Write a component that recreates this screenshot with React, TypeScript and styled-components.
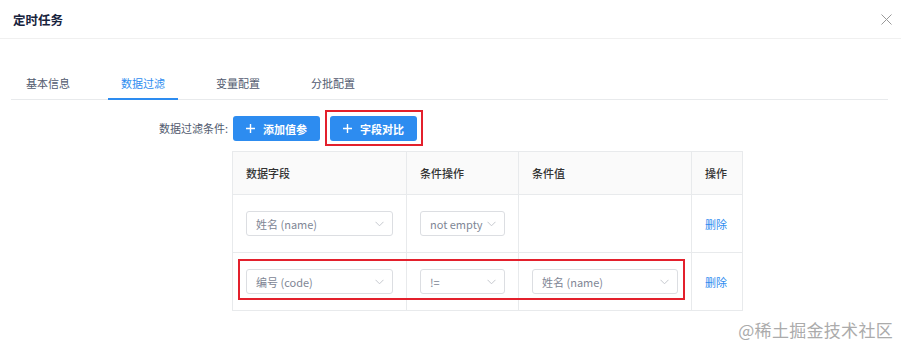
import React from "react";
import styled, { createGlobalStyle } from "styled-components";

const GlobalStyle = createGlobalStyle`
  html, body {
    margin: 0;
    padding: 0;
    background: #fff;
  }
  body {
    font-family: "Noto Sans CJK SC", "Noto Sans", sans-serif;
    font-size: 11px;
    color: #515a6e;
  }
`;

const Modal = styled.div`
  position: relative;
  width: 901px;
  height: 348px;
  background: #fff;
  overflow: hidden;
`;

const Header = styled.div`
  height: 38px;
  border-bottom: 1px solid #f0f0f0;
  display: flex;
  align-items: center;
  justify-content: space-between;
  padding: 0 9px 0 13px;
`;

const Title = styled.div`
  font-size: 12.5px;
  font-weight: 600;
  color: #17233d;
`;

const Close = styled.div`
  width: 11px;
  height: 11px;
  display: flex;
  align-items: center;
  justify-content: center;
`;

const Body = styled.div`
  padding: 27px 13px 0 11px;
`;

const Tabs = styled.div`
  display: flex;
  gap: 25px;
  padding-left: 2px;
  border-bottom: 1px solid #e8eaec;
`;

const Tab = styled.div<{ active?: boolean }>`
  position: relative;
  height: 33px;
  padding: 0 13px;
  display: flex;
  align-items: center;
  color: ${(p) => (p.active ? "#2d8cf0" : "#515a6e")};
  &::after {
    content: "";
    display: ${(p) => (p.active ? "block" : "none")};
    position: absolute;
    left: 0;
    right: 0;
    bottom: -1px;
    height: 2px;
    background: #2d8cf0;
  }
`;

const FormItem = styled.div`
  display: flex;
  margin-top: 16px;
`;

const Label = styled.div`
  width: 221px;
  box-sizing: border-box;
  padding-right: 4px;
  text-align: right;
  line-height: 25px;
  color: #515a6e;
`;

const Content = styled.div`
  display: flex;
  flex-direction: column;
`;

const ButtonRow = styled.div`
  display: flex;
  gap: 10px;
  padding-left: 1px;
`;

const Highlight = styled.div`
  position: relative;
  &::after {
    content: "";
    position: absolute;
    inset: -6px -6px -5px -5px;
    border: 2px solid #e3202c;
    pointer-events: none;
  }
`;

const Button = styled.button`
  height: 25px;
  width: 87px;
  border: none;
  border-radius: 3px;
  background: #2d8cf0;
  color: #fff;
  font-family: inherit;
  font-size: 11px;
  font-weight: 600;
  display: flex;
  align-items: center;
  justify-content: center;
  gap: 8px;
  padding: 0;
  cursor: pointer;
`;

const TableWrap = styled.div`
  position: relative;
  margin-top: 10px;
`;

const Table = styled.div`
  width: 511px;
  border: 1px solid #e8eaec;
  border-bottom: none;
  box-sizing: border-box;
`;

const Row = styled.div<{ head?: boolean }>`
  display: grid;
  grid-template-columns: 174px 112px 173px 50px;
  height: ${(p) => (p.head ? "42px" : "57px")};
  background: ${(p) => (p.head ? "#fafafa" : "#fff")};
  border-bottom: 1px solid #e8eaec;
`;

const Cell = styled.div<{ head?: boolean }>`
  display: flex;
  align-items: center;
  padding: 0 13px;
  border-right: 1px solid #e8eaec;
  color: ${(p) => (p.head ? "#333" : "#515a6e")};
  font-weight: ${(p) => (p.head ? 500 : 400)};
  &:last-child {
    border-right: none;
  }
`;

const Select = styled.div<{ w: number }>`
  width: ${(p) => p.w}px;
  height: 25px;
  box-sizing: border-box;
  border: 1px solid #dcdee2;
  border-radius: 3px;
  display: flex;
  align-items: center;
  justify-content: space-between;
  padding: 0 8px 0 9px;
  color: #808695;
  background: #fff;
  white-space: nowrap;
`;

const Link = styled.span`
  color: #2d8cf0;
  cursor: pointer;
`;

const RowMark = styled.div`
  position: absolute;
  left: 6px;
  top: 108px;
  width: 447px;
  height: 41px;
  box-sizing: border-box;
  border: 2px solid #e3202c;
  pointer-events: none;
`;

const Watermark = styled.div`
  position: absolute;
  right: 8px;
  bottom: 6px;
  font-size: 17px;
  color: #ababab;
  letter-spacing: 0.3px;
`;

const Chevron = () => (
  <svg width="9" height="6" viewBox="0 0 9 6">
    <polyline points="0.5,0.8 4.5,4.8 8.5,0.8" fill="none" stroke="#c5c8ce" strokeWidth="1" />
  </svg>
);

const Plus = () => (
  <svg width="9" height="9" viewBox="0 0 9 9">
    <path d="M4.5 0v9M0 4.5h9" stroke="#fff" strokeWidth="1.4" />
  </svg>
);

const Drop = ({ w, text }: { w: number; text: string }) => (
  <Select w={w}>
    <span>{text}</span>
    <Chevron />
  </Select>
);

export default function App() {
  return (
    <Modal>
      <GlobalStyle />
      <Header>
        <Title>定时任务</Title>
        <Close>
          <svg width="11" height="11" viewBox="0 0 11 11">
            <path d="M0.5 0.5l10 10M10.5 0.5l-10 10" stroke="#999" strokeWidth="1" />
          </svg>
        </Close>
      </Header>
      <Body>
        <Tabs>
          <Tab>基本信息</Tab>
          <Tab active>数据过滤</Tab>
          <Tab>变量配置</Tab>
          <Tab>分批配置</Tab>
        </Tabs>
        <FormItem>
          <Label>数据过滤条件:</Label>
          <Content>
            <ButtonRow>
              <Button>
                <Plus />
                添加值参
              </Button>
              <Highlight>
                <Button>
                  <Plus />
                  字段对比
                </Button>
              </Highlight>
            </ButtonRow>
            <TableWrap>
              <Table>
                <Row head>
                  <Cell head>数据字段</Cell>
                  <Cell head>条件操作</Cell>
                  <Cell head>条件值</Cell>
                  <Cell head>操作</Cell>
                </Row>
                <Row>
                  <Cell>
                    <Drop w={147} text="姓名 (name)" />
                  </Cell>
                  <Cell>
                    <Drop w={86} text="not empty" />
                  </Cell>
                  <Cell />
                  <Cell>
                    <Link>删除</Link>
                  </Cell>
                </Row>
                <Row>
                  <Cell>
                    <Drop w={147} text="编号 (code)" />
                  </Cell>
                  <Cell>
                    <Drop w={86} text="!=" />
                  </Cell>
                  <Cell>
                    <Drop w={147} text="姓名 (name)" />
                  </Cell>
                  <Cell>
                    <Link>删除</Link>
                  </Cell>
                </Row>
              </Table>
              <RowMark />
            </TableWrap>
          </Content>
        </FormItem>
      </Body>
      <Watermark>@稀土掘金技术社区</Watermark>
    </Modal>
  );
}
